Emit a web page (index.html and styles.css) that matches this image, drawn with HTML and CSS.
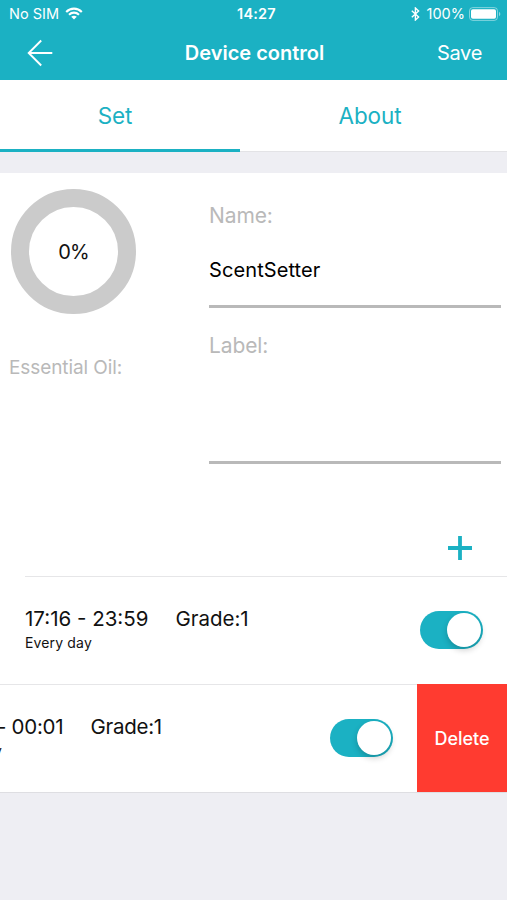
FILE: index.html
```html
<!DOCTYPE html>
<html lang="en">
<head>
    <meta charset="UTF-8">
    <meta name="viewport" content="width=device-width, initial-scale=1.0">
    <title>Device control</title>
    <link rel="stylesheet" href="styles.css">
</head>
<body>
    <header class="header">
        <div class="status-bar">
            <div class="status-left">
                <span class="carrier">No SIM</span>
                <svg class="wifi" width="18" height="13" viewBox="0 0 18 13" fill="none" stroke="#fff" stroke-width="2.1">
                    <path d="M1.2 4.9C5.6.5 12.4.5 16.8 4.9"/>
                    <path d="M4 7.7c2.9-2.8 7.1-2.8 10 0"/>
                    <path d="M9 12.6 6.2 9.8c1.7-1.5 3.9-1.5 5.6 0z" fill="#fff" stroke="none"/>
                </svg>
            </div>
            <span class="clock">14:27</span>
            <div class="status-right">
                <svg class="bluetooth" width="9" height="14" viewBox="0 0 9 14" fill="none" stroke="#fff" stroke-width="1.4">
                    <path d="M.8 3.8 7.6 10 4.4 13V1l3.2 3L.8 10.2"/>
                </svg>
                <span class="battery-text">100%</span>
                <svg class="battery" width="32" height="14" viewBox="0 0 32 14">
                    <rect x=".5" y=".6" width="28" height="12.8" rx="3.2" fill="none" stroke="#fff" stroke-opacity=".45"/>
                    <rect x="2" y="2.2" width="25" height="9.6" rx="1.8" fill="#fff"/>
                    <path d="M30 4.8c1.8.8 1.8 3.6 0 4.4z" fill="#fff" fill-opacity=".5"/>
                </svg>
            </div>
        </div>
        <nav class="nav">
            <a href="#" class="back" aria-label="Back">
                <svg width="26" height="28" viewBox="0 0 26 28" fill="none" stroke="#fff" stroke-width="1.9">
                    <path d="M25.3 14H1.5M14.2 1.5 1.7 14l12.5 12.5"/>
                </svg>
            </a>
            <h1 class="title">Device control</h1>
            <a href="#" class="save">Save</a>
        </nav>
    </header>

    <div class="tabs">
        <a href="#" class="tab active"><span>Set</span></a>
        <a href="#" class="tab"><span>About</span></a>
    </div>

    <main class="panel">
        <section class="device">
            <div class="oil">
                <div class="ring"><span>0%</span></div>
                <p class="oil-label">Essential Oil:</p>
            </div>
            <div class="fields">
                <div class="field">
                    <span class="field-label">Name:</span>
                    <span class="field-value">ScentSetter</span>
                </div>
                <div class="field field-tall">
                    <span class="field-label">Label:</span>
                </div>
            </div>
        </section>

        <div class="add-row">
            <button class="add" aria-label="Add schedule">
                <svg width="24" height="24" viewBox="0 0 24 24" stroke="#1bb1c3" stroke-width="3.8">
                    <path d="M12 0v24M0 12h24"/>
                </svg>
            </button>
        </div>

        <ul class="schedule">
            <li class="row">
                <div class="row-content">
                    <div class="row-text">
                        <p class="row-main"><span class="time">17:16 - 23:59</span><span class="grade">Grade:1</span></p>
                        <p class="repeat">Every day</p>
                    </div>
                    <span class="switch"></span>
                </div>
            </li>
            <li class="row swiped">
                <div class="row-content">
                    <div class="row-text">
                        <p class="row-main"><span class="time">00:00 - 00:01</span><span class="grade">Grade:1</span></p>
                        <p class="repeat">Every day</p>
                    </div>
                    <span class="switch"></span>
                </div>
                <button class="delete">Delete</button>
            </li>
        </ul>
    </main>
</body>
</html>
```
FILE: styles.css
```css
:root {
    --accent: #1bb1c3;
    --background: #eeeef3;
    --muted: #b9b9b9;
    --danger: #ff3b30;
}

* {
    margin: 0;
    padding: 0;
    box-sizing: border-box;
}

body {
    background: var(--background);
    color: #111;
    font-family: Inter, "Liberation Sans", sans-serif;
    min-height: 100vh;
    overflow: hidden;
}

a {
    color: inherit;
    text-decoration: none;
}

button {
    border: none;
    background: none;
    font-family: inherit;
}

.header {
    background: var(--accent);
    color: #fff;
    height: 80px;
}

.status-bar {
    display: grid;
    grid-template-columns: 1fr auto 1fr;
    align-items: center;
    height: 27px;
    padding: 0 6px 0 9px;
    font-size: 14.5px;
}

.status-left,
.status-right {
    display: flex;
    align-items: center;
}

.status-left {
    gap: 6px;
}

.status-right {
    justify-content: flex-end;
}

.clock {
    padding-left: 3px;
    font-weight: 600;
    font-size: 14.5px;
    letter-spacing: 0.2px;
}

.battery-text {
    margin: 0 4px 0 7px;
}

.nav {
    display: grid;
    grid-template-columns: 1fr auto 1fr;
    align-items: center;
    height: 51px;
    padding: 0 25px 0 27px;
}

.back {
    display: flex;
}

.title {
    font-size: 20px;
    font-weight: 600;
    letter-spacing: 0;
}

.save {
    justify-self: end;
    font-size: 20px;
    letter-spacing: -0.3px;
}

.tabs {
    display: flex;
    height: 72px;
    background: #fff;
    border-bottom: 1px solid #e3e3e6;
}

.tab {
    flex: 1;
    display: flex;
    align-items: center;
    justify-content: center;
    height: 72px;
    padding: 1px 0 0;
    color: var(--accent);
    font-size: 22.5px;
    letter-spacing: -0.1px;
    border-bottom: 3px solid transparent;
}

.tab.active {
    flex: 0 0 240px;
    padding-right: 10px;
    border-color: var(--accent);
}

.tab:last-child {
    padding-right: 7px;
}

.panel {
    margin-top: 21px;
    background: #fff;
    border-bottom: 1px solid #dedee2;
}

.device {
    display: flex;
    height: 346px;
}

.oil {
    width: 209px;
    padding: 16px 0 0 9px;
}

.ring {
    display: flex;
    align-items: center;
    justify-content: center;
    width: 125px;
    height: 125px;
    margin-left: 2px;
    border: 18px solid #cbcbcb;
    border-radius: 50%;
    font-size: 20px;
    letter-spacing: -0.8px;
}

.oil-label {
    margin-top: 42px;
    color: var(--muted);
    font-size: 19px;
    line-height: 24px;
    letter-spacing: -0.1px;
}

.fields {
    flex: 1;
    padding-right: 6px;
}

.field {
    display: flex;
    flex-direction: column;
    height: 135px;
    padding-top: 30px;
    border-bottom: 3px solid #b9b9b9;
}

.field-tall {
    height: 156px;
    padding-top: 25px;
}

.field-label {
    color: var(--muted);
    font-size: 21px;
    line-height: 26px;
    letter-spacing: -0.1px;
}

.field-value {
    margin-top: 28px;
    color: #000;
    font-size: 20px;
    line-height: 26px;
    letter-spacing: 0.1px;
}

.add-row {
    display: flex;
    justify-content: flex-end;
    height: 57px;
    padding: 17px 35px 0 0;
}

.add {
    width: 24px;
    height: 24px;
}

.schedule {
    list-style: none;
    overflow: hidden;
}

.row {
    display: flex;
    height: 108px;
}

.row-content {
    flex: none;
    display: flex;
    align-items: center;
    justify-content: space-between;
    width: 482px;
    margin-left: 25px;
    padding: 0 24px 2px 0;
    border-top: 1px solid #e6e6e8;
}

/* row dragged left to reveal the delete button */
.swiped .row-content {
    margin-left: -65px;
}

.swiped .row-main {
    letter-spacing: -0.25px;
}

.row-main {
    display: flex;
    gap: 27px;
    font-size: 20.5px;
    line-height: 26px;
    letter-spacing: 0;
}

.repeat {
    font-size: 14px;
    line-height: 22px;
    letter-spacing: 0.15px;
}

.switch {
    display: flex;
    justify-content: flex-end;
    width: 63px;
    height: 38px;
    padding: 2px;
    border-radius: 19px;
    background: var(--accent);
}

.switch::after {
    content: '';
    width: 34px;
    height: 34px;
    border-radius: 50%;
    background: #fff;
    box-shadow: 0 3px 6px rgba(0, 0, 0, 0.2);
}

.delete {
    flex: 1;
    background: var(--danger);
    color: #fff;
    font-size: 18px;
    font-weight: 500;
}
```
